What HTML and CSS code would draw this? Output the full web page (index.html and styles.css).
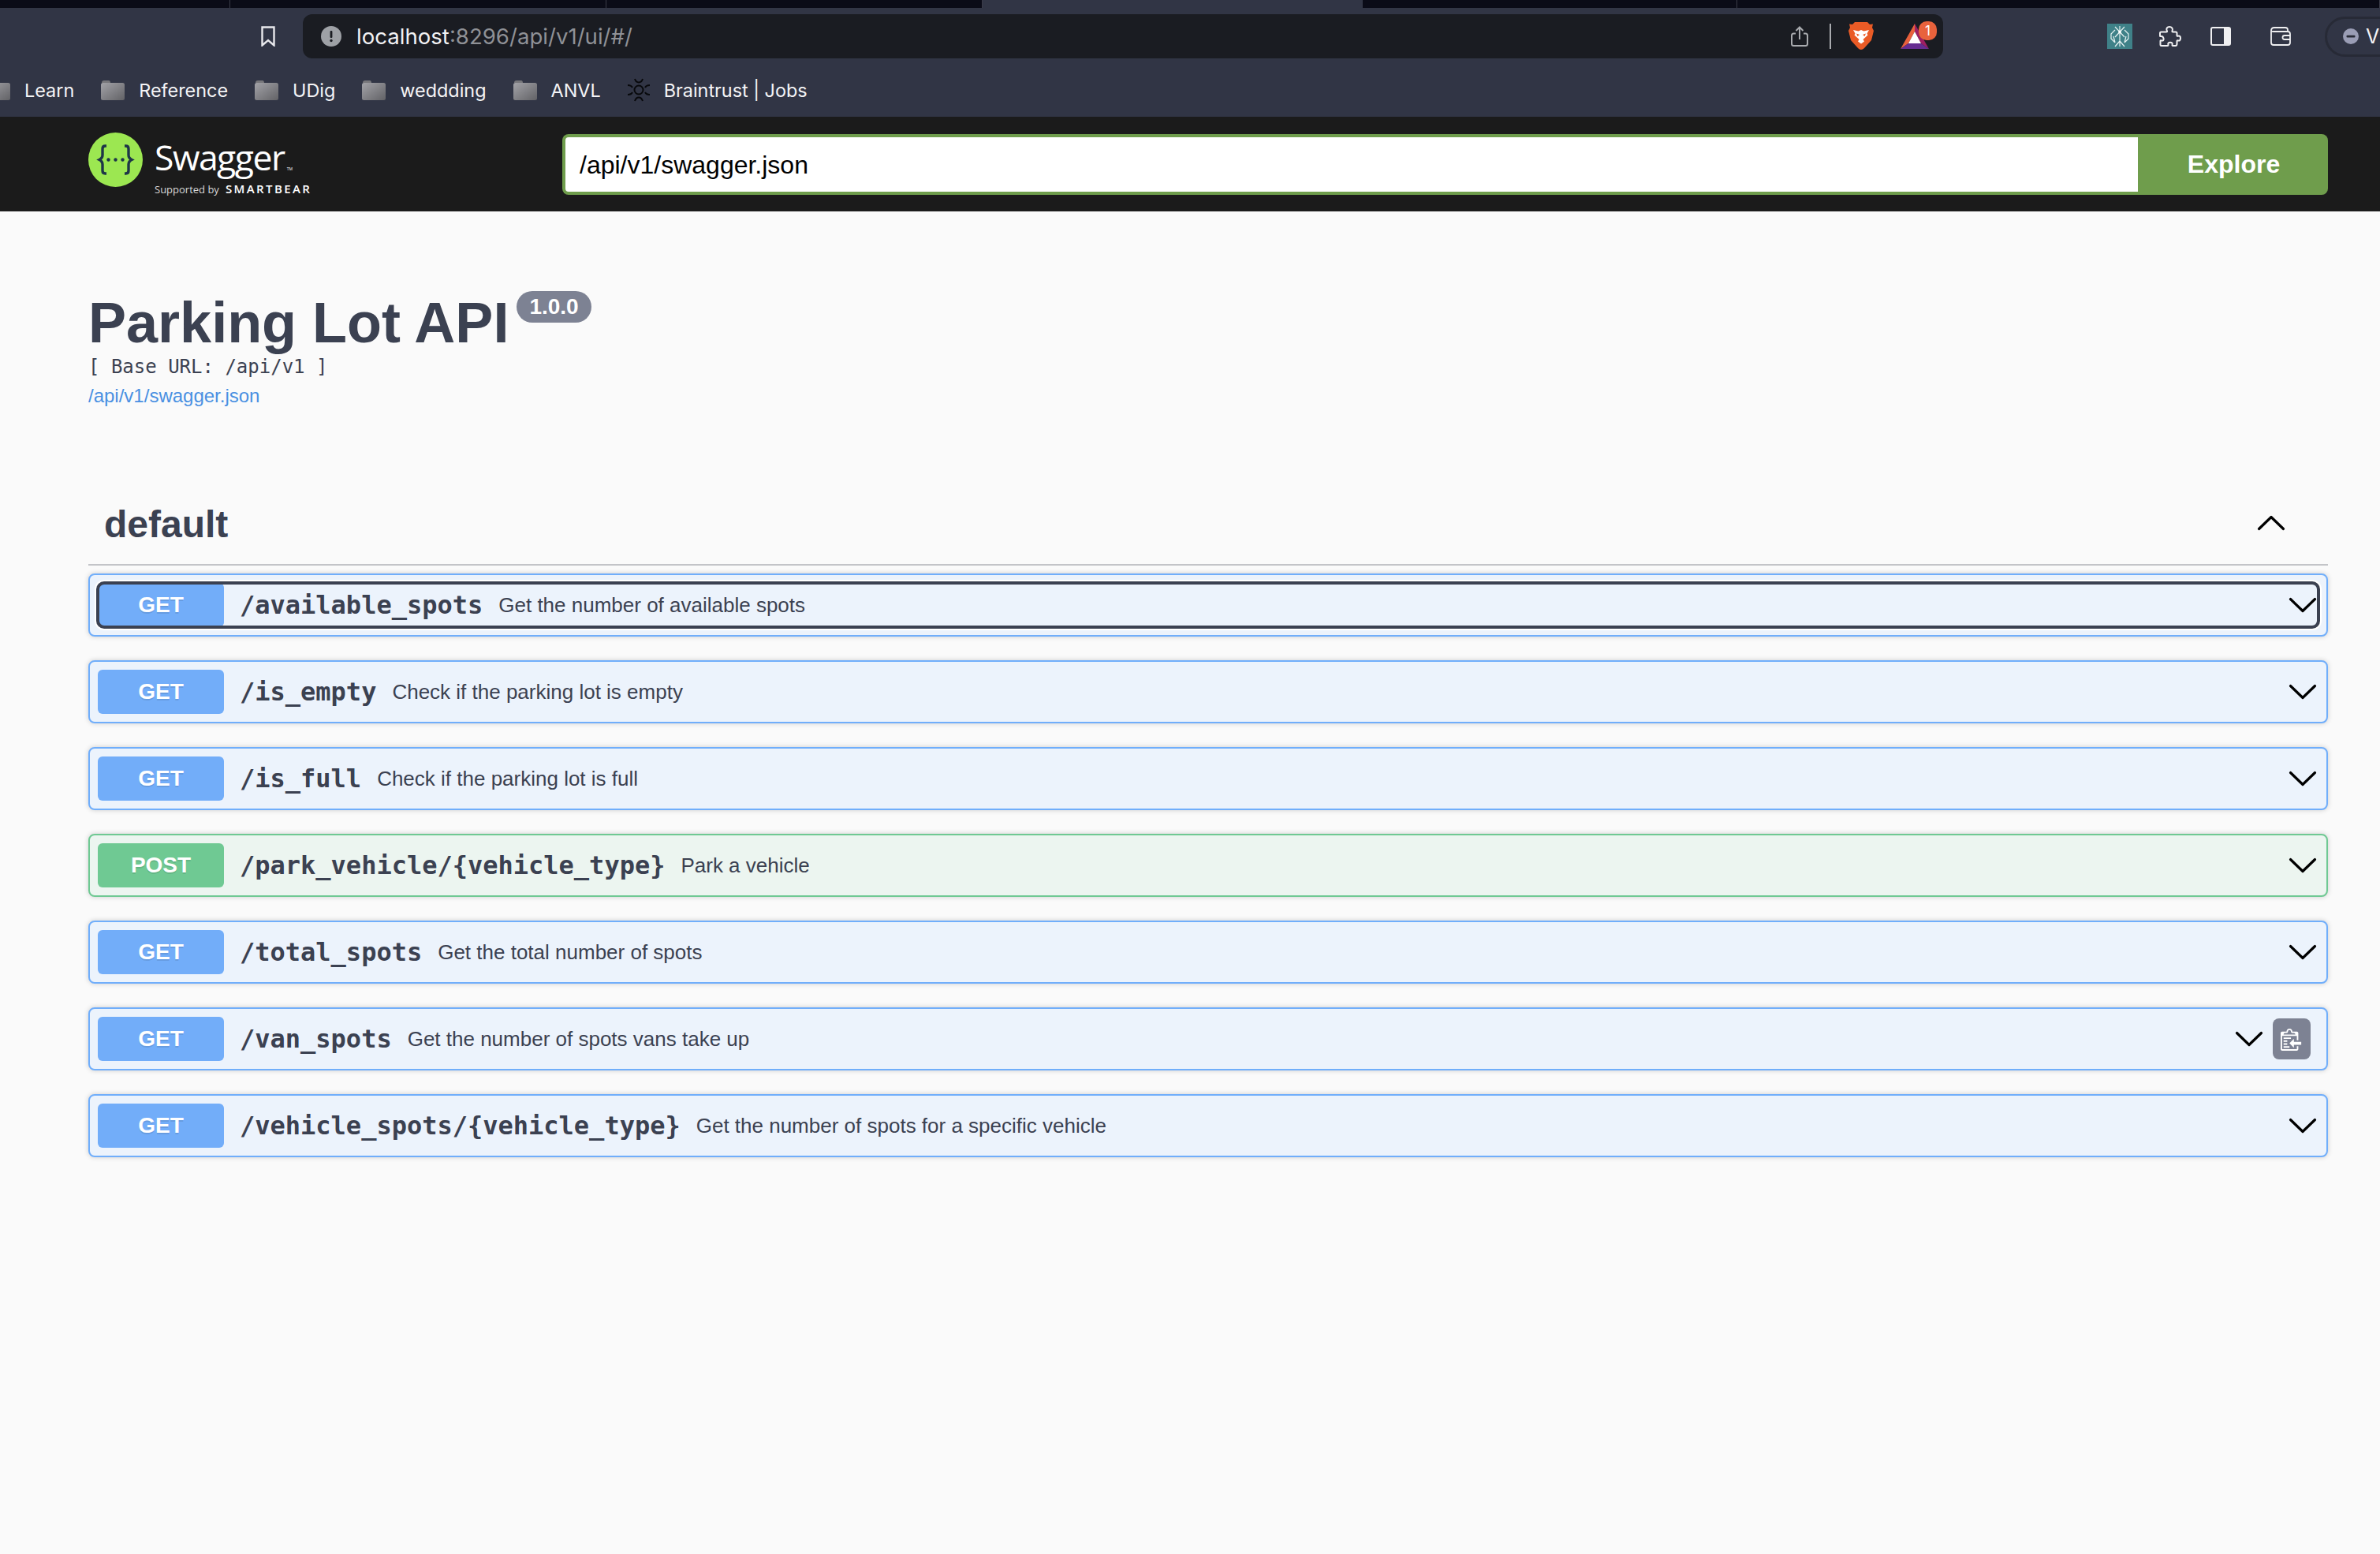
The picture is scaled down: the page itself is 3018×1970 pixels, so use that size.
FILE: index.html
```html
<!DOCTYPE html>
<html lang="en">
<head>
    <meta charset="UTF-8">
    <title>Swagger UI</title>
    <link rel="stylesheet" href="styles.css">
</head>
<body>
    <svg class="defs" width="0" height="0">
        <defs>
            <linearGradient id="folderFill" x1="0" y1="0" x2="1" y2="1">
                <stop offset="0" stop-color="#a2a2a7"/>
                <stop offset="1" stop-color="#626266"/>
            </linearGradient>
            <symbol id="folder" viewBox="0 0 30 25">
                <path d="M1 3c0-2 1-3 3-3h6c1 0 2 1 2 3z" fill="#77777b"/>
                <rect x="0" y="3" width="30" height="22" rx="2.5" fill="url(#folderFill)"/>
            </symbol>
            <symbol id="chevron" viewBox="0 0 40 40">
                <polyline points="4.5,12.5 20,27.5 35.5,12.5" fill="none" stroke="#000" stroke-width="3.2" stroke-linecap="round" stroke-linejoin="round"/>
            </symbol>
        </defs>
    </svg>

    <div class="tabstrip">
        <div class="tab"></div>
        <div class="tab"></div>
        <div class="tab"></div>
        <div class="tab tab-active"></div>
        <div class="tab"></div>
        <div class="tab"></div>
    </div>

    <div class="toolbar">
        <div class="navrow">
            <svg class="bookmark-icon" viewBox="0 0 18 26"><path d="M1.5 1.5h15v23L9 18l-7.500 6.500z" fill="none" stroke="#e8e8ec" stroke-width="2.400"/></svg>
            <div class="address">
                <svg class="info-icon" viewBox="0 0 26 26"><circle cx="13" cy="13" r="13" fill="#9ea1a6"/><rect x="11.600" y="6" width="2.800" height="9" rx="1" fill="#1a1c22"/><circle cx="13" cy="18.500" r="1.700" fill="#1a1c22"/></svg>
                <span class="host">localhost</span><span class="host-rest">:8296/api/v1/ui/#/</span>
                <div class="address-icons">
                    <svg class="share-icon" viewBox="0 0 22 26"><path d="M6 9.500H3.500Q1 9.500 1 12v10.500Q1 25 3.500 25h15q2.500 0 2.500-2.500V12q0-2.500-2.500-2.500H16M11 17V1.500M6.500 6 11 1.500 15.500 6" fill="none" stroke="#a9abaf" stroke-width="2"/></svg>
                    <div class="address-divider"></div>
                    <svg class="brave-icon" viewBox="0 0 32 36">
                        <path d="M8 0h16l3 3 4-.5L30 7l2 4-3 12-9 10c-2.500 2.500-5.500 2.500-8 0L3 23 0 11l2-4-1-4.500L5 3z" fill="#ea5b26"/>
                        <path d="M6 10l6.500 1.500L16 10l3.500 1.500L26 10l-2.500 4.500 1 2-6 5.500 1.500 2.500-4 3-4-3 1.500-2.500-6-5.500 1-2z" fill="#fff"/>
                        <path d="M10 14.500l4 1.500-2.500 2zM22 14.500l-4 1.500 2.500 2z" fill="#ea5b26"/>
                    </svg>
                    <div class="bat">
                        <svg class="bat-icon" viewBox="0 0 36 32">
                            <polygon points="18,0 0,32 10,25 18,10" fill="#e8603c"/>
                            <polygon points="18,0 36,32 26,25 18,10" fill="#9e1f63"/>
                            <polygon points="0,32 36,32 26,25 10,25" fill="#662d91"/>
                            <polygon points="18,10 10,25 26,25" fill="#fff"/>
                        </svg>
                        <span class="bat-count">1</span>
                    </div>
                </div>
            </div>
            <svg class="ext-icon" viewBox="0 0 32 32">
                <rect width="32" height="32" fill="#3f8188"/>
                <path d="M16 3v26M10 4l12 13M22 4 10 17M10 8 5 13v6l5 5M22 8l5 5v6l-5 5M10 24l-2-8M22 24l2-8M10 29l6-7 6 7" fill="none" stroke="#e6f2f2" stroke-width="1.200"/>
                <circle cx="16" cy="10.500" r="1.800" fill="#fff"/>
            </svg>
            <svg class="puzzle-icon" viewBox="0 0 28 26"><path d="M10 6.500C8 3 10.500 1 13 1s5 2 3.500 5.500c-.3.8.2 1 1 1H21c1 0 1.500.5 1.500 1.500v3c0 .8.5 1 1.200.7C26 11.800 27 13.500 27 15.500s-1 3.800-3.300 2.800c-.7-.3-1.200 0-1.200.7v3.500c0 1-.5 2.500-2 2.500h-3c-1 0-1.200-.7-.9-1.500.6-1.500-.6-2.800-2.600-2.800s-3.200 1.300-2.600 2.800c.3.800 0 1.500-.9 1.500H3c-1 0-1.500-.5-1.500-1.500V19c0-.8.5-1 1.200-.7C5 19.300 6 17.500 5.500 15.500 5 13.500 3.500 12.700 2 13c-.8.200-1 0-1-1V9c0-1 .500-1.500 1.500-1.500H9c1 0 1.300-.2 1-1z" fill="none" stroke="#f0f0f2" stroke-width="2"/></svg>
            <svg class="panel-icon" viewBox="0 0 26 24"><rect x="1" y="1" width="24" height="22" rx="2" fill="none" stroke="#f0f0f2" stroke-width="2"/><rect x="17" y="1" width="8" height="22" fill="#f0f0f2"/></svg>
            <svg class="wallet-icon" viewBox="0 0 26 24"><path d="M1 5q0-4 4-4h14q3 0 3 3v1M1 5v15q0 3 3 3h18q3 0 3-3V9q0-3-3-3H4Q1 6 1 5zM25 11h-7q-2.500 0-2.500 2.500T18 16h7" fill="none" stroke="#eeeef0" stroke-width="1.800"/></svg>
            <div class="profile-pill">
                <svg class="pill-icon" viewBox="0 0 20 20"><circle cx="10" cy="10" r="10" fill="#9a9db5"/><rect x="4.500" y="8.700" width="11" height="2.800" rx="1" fill="#272a36"/></svg>
                <span class="pill-name">VI</span>
            </div>
        </div>

        <div class="bookmarks">
            <div class="bm"><svg class="folder-icon"><use href="#folder"/></svg><span>Learn</span></div>
            <div class="bm"><svg class="folder-icon"><use href="#folder"/></svg><span>Reference</span></div>
            <div class="bm"><svg class="folder-icon"><use href="#folder"/></svg><span>UDig</span></div>
            <div class="bm"><svg class="folder-icon"><use href="#folder"/></svg><span>weddding</span></div>
            <div class="bm"><svg class="folder-icon"><use href="#folder"/></svg><span>ANVL</span></div>
            <div class="bm bm-site">
                <svg class="braintrust-icon" viewBox="0 0 32 30">
                    <g fill="none" stroke="#08090c" stroke-width="2">
                        <circle cx="16" cy="15" r="5.500"/>
                        <path d="M11 1c1 3 2.500 4.500 5 4.500S20 4 21 1M11 29c1-3 2.500-4.500 5-4.500s4 1.500 5 4.500M2 9c3 0 5 1 6 3M30 9c-3 0-5 1-6 3M2 21c3 0 5-1 6-3M30 21c-3 0-5-1-6-3"/>
                    </g>
                </svg>
                <span>Braintrust | Jobs</span>
            </div>
        </div>
    </div>

    <div class="topbar">
        <div class="logo">
            <svg class="logo-mark" viewBox="0 0 69 69">
                <circle cx="34.500" cy="34.500" r="34.500" fill="#9ce751"/>
                <path d="M23 17h-1.500q-3.500 0-3.500 3.500v8q0 4-4 6 4 2 4 6v8q0 3.500 3.500 3.500H23M46 17h1.500q3.500 0 3.500 3.500v8q0 4 4 6-4 2-4 6v8q0 3.500-3.500 3.500H46" fill="none" stroke="#1e3648" stroke-width="3.400"/>
                <circle cx="25.500" cy="34.500" r="2.200" fill="#1e3648"/>
                <circle cx="34.500" cy="34.500" r="2.200" fill="#1e3648"/>
                <circle cx="43.500" cy="34.500" r="2.200" fill="#1e3648"/>
            </svg>
            <div class="logo-text">
                <div class="logo-name">Swagger<span class="logo-tm">TM</span></div>
                <div class="logo-sub"><span class="logo-by">Supported by</span><span class="logo-bear">SMARTBEAR</span></div>
            </div>
        </div>
        <form class="explore-form">
            <div class="url-input">/api/v1/swagger.json</div>
            <div class="explore-btn">Explore</div>
        </form>
    </div>

    <div class="wrapper">
        <div class="info">
            <div class="title-row">
                <h1 class="title">Parking Lot API</h1>
                <span class="version">1.0.0</span>
            </div>
            <pre class="base-url">[ Base URL: /api/v1 ]</pre>
            <a class="spec-link" href="#">/api/v1/swagger.json</a>
        </div>

        <div class="tag-header">
            <h3 class="tag-name">default</h3>
            <svg class="chevron chevron-up"><use href="#chevron"/></svg>
        </div>

        <div class="opblock get">
            <div class="summary focused">
                <span class="method">GET</span>
                <span class="path">/available_spots</span>
                <span class="desc">Get the number of available spots</span>
                <svg class="chevron"><use href="#chevron"/></svg>
            </div>
        </div>
        <div class="opblock get">
            <div class="summary">
                <span class="method">GET</span>
                <span class="path">/is_empty</span>
                <span class="desc">Check if the parking lot is empty</span>
                <svg class="chevron"><use href="#chevron"/></svg>
            </div>
        </div>
        <div class="opblock get">
            <div class="summary">
                <span class="method">GET</span>
                <span class="path">/is_full</span>
                <span class="desc">Check if the parking lot is full</span>
                <svg class="chevron"><use href="#chevron"/></svg>
            </div>
        </div>
        <div class="opblock post">
            <div class="summary">
                <span class="method">POST</span>
                <span class="path">/park_vehicle/{vehicle_type}</span>
                <span class="desc">Park a vehicle</span>
                <svg class="chevron"><use href="#chevron"/></svg>
            </div>
        </div>
        <div class="opblock get">
            <div class="summary">
                <span class="method">GET</span>
                <span class="path">/total_spots</span>
                <span class="desc">Get the total number of spots</span>
                <svg class="chevron"><use href="#chevron"/></svg>
            </div>
        </div>
        <div class="opblock get">
            <div class="summary">
                <span class="method">GET</span>
                <span class="path">/van_spots</span>
                <span class="desc">Get the number of spots vans take up</span>
                <svg class="chevron"><use href="#chevron"/></svg>
                <div class="copy-btn">
                    <svg class="copy-icon" viewBox="0 0 15 16"><path fill="#fff" fill-rule="evenodd" d="M2 13h4v1H2v-1zm5-6H2v1h5V7zm2 3V8l-3 3 3 3v-2h5v-2H9zM4.500 9H2v1h2.500V9zM2 12h2.500v-1H2v1zm9 1h1v2c-.02.28-.11.52-.3.7-.19.18-.42.28-.7.3H1c-.55 0-1-.45-1-1V4c0-.55.45-1 1-1h3c0-1.110.89-2 2-2 1.110 0 2 .89 2 2h3c.55 0 1 .45 1 1v5h-1V6H1v9h10v-2zM2 5h8c0-.55-.45-1-1-1H8c-.55 0-1-.45-1-1s-.45-1-1-1-1 .45-1 1-.45 1-1 1H3c-.55 0-1 .45-1 1z"/></svg>
                </div>
            </div>
        </div>
        <div class="opblock get">
            <div class="summary">
                <span class="method">GET</span>
                <span class="path">/vehicle_spots/{vehicle_type}</span>
                <span class="desc">Get the number of spots for a specific vehicle</span>
                <svg class="chevron"><use href="#chevron"/></svg>
            </div>
        </div>
    </div>
</body>
</html>
```

FILE: styles.css
```css
html, body {
    margin: 0;
    height: 100%;
}
body {
    background: #fafafa;
    font-family: "Liberation Sans", Arial, sans-serif;
    color: #3b4151;
    overflow: hidden;
}
.defs {
    display: block;
    height: 0;
}

/* browser chrome */
.tabstrip {
    display: grid;
    grid-template-columns: 292px 477px 477px 482px 475px 1fr;
    height: 10px;
    background: #0a0b17;
}
.tab {
    border-right: 1px solid #3a3c48;
}
.tab-active {
    background: #313545;
    border-right: none;
}
.toolbar {
    height: 138px;
    background: #313545;
    font-family: Inter, "Liberation Sans", sans-serif;
    color: #f4f4f6;
}
.navrow {
    display: flex;
    align-items: center;
    width: 3100px;
    height: 66px;
    padding: 6px 0 0 331px;
    box-sizing: border-box;
}
.bookmark-icon {
    width: 18px;
    height: 26px;
    margin-right: 35px;
}
.address {
    display: flex;
    align-items: center;
    width: 2080px;
    height: 56px;
    padding-left: 23px;
    box-sizing: border-box;
    background: #1a1c22;
    border-radius: 12px;
    font-size: 27.6px;
}
.info-icon {
    width: 26px;
    height: 26px;
    margin-right: 19px;
}
.host {
    color: #f2f2f4;
}
.host-rest {
    color: #8f9196;
}
.address-icons {
    display: flex;
    align-items: center;
    margin-left: auto;
    padding-right: 18px;
}
.share-icon {
    width: 22px;
    height: 26px;
}
.address-divider {
    width: 2px;
    height: 32px;
    margin: 0 22px 0 27px;
    background: #a9abaf;
}
.brave-icon {
    width: 32px;
    height: 36px;
    margin-right: 34px;
}
.bat {
    position: relative;
    width: 36px;
    height: 32px;
}
.bat-icon {
    display: block;
    width: 36px;
    height: 32px;
}
.bat-count {
    position: absolute;
    left: 23px;
    top: -3px;
    width: 23px;
    height: 24px;
    background: #e8623c;
    border-radius: 10px;
    color: #fff;
    font-size: 17px;
    line-height: 24px;
    text-align: center;
}
.ext-icon {
    width: 32px;
    height: 32px;
    margin-left: 208px;
}
.puzzle-icon {
    width: 28px;
    height: 26px;
    margin-left: 34px;
}
.panel-icon {
    width: 26px;
    height: 24px;
    margin-left: 37px;
}
.wallet-icon {
    width: 26px;
    height: 24px;
    margin-left: 50px;
}
.profile-pill {
    display: flex;
    align-items: center;
    width: 120px;
    height: 51px;
    margin-left: 43px;
    padding-left: 20px;
    box-sizing: border-box;
    border: 3px solid #272a36;
    border-radius: 26px;
    font-size: 25px;
    flex-shrink: 0;
}
.pill-icon {
    width: 20px;
    height: 20px;
    margin-right: 9px;
}
.bookmarks {
    display: flex;
    align-items: center;
    gap: 34px;
    height: 68px;
    margin-top: 4px;
    margin-left: -17px;
    font-size: 23.4px;
}
.bm {
    display: flex;
    align-items: center;
    gap: 18px;
}
.bm-site {
    gap: 16px;
    margin-left: -2px;
}
.folder-icon {
    width: 30px;
    height: 25px;
}
.braintrust-icon {
    width: 32px;
    height: 30px;
}

/* swagger top bar */
.topbar {
    display: flex;
    align-items: center;
    height: 120px;
    padding: 0 66px 0 112px;
    background: #1b1b1b;
}
.logo {
    display: flex;
    align-items: flex-start;
    width: 601px;
    height: 69px;
    margin-top: -11px;
    color: #fff;
    font-family: "Open Sans", sans-serif;
}
.logo-mark {
    width: 69px;
    height: 69px;
}
.logo-text {
    margin: 7px 0 0 15px;
}
.logo-name {
    display: flex;
    align-items: flex-end;
    height: 48px;
    font-size: 44.500px;
    line-height: 48px;
    letter-spacing: -1.500px;
}
.logo-tm {
    margin: 0 0 6px 3px;
    font-size: 5px;
    line-height: 6px;
    letter-spacing: 0;
}
.logo-sub {
    display: flex;
    align-items: baseline;
    margin-top: 8px;
    line-height: 16px;
}
.logo-by {
    font-size: 13px;
    color: #d8d8d8;
}
.logo-bear {
    margin-left: 8px;
    font-size: 15px;
    font-weight: 600;
    letter-spacing: 2.400px;
}
.explore-form {
    display: flex;
    flex: 1;
    height: 77px;
    margin: 1px 0 0;
}
.url-input {
    flex: 1;
    padding-left: 18px;
    background: #fff;
    border: 4px solid #6f9d4c;
    border-right: none;
    border-radius: 8px 0 0 8px;
    color: #000;
    font-size: 32px;
    line-height: 71px;
}
.explore-btn {
    width: 239px;
    padding-left: 2px;
    background: #6f9d4c;
    border-radius: 0 8px 8px 0;
    color: #fff;
    font-size: 32px;
    font-weight: bold;
    line-height: 77px;
    text-align: center;
}

/* swagger content */
.wrapper {
    padding: 0 66px 0 112px;
}
.info {
    padding-top: 99px;
}
.title-row {
    display: flex;
    align-items: flex-start;
}
.title {
    margin: 0;
    font-size: 72px;
    font-weight: bold;
    line-height: 84px;
}
.version {
    margin: 2px 0 0 10px;
    padding: 0 16px;
    background: #7d8293;
    border-radius: 20px;
    color: #fff;
    font-size: 28px;
    font-weight: bold;
    line-height: 40px;
}
.base-url {
    margin: 0;
    font-family: "DejaVu Sans Mono", monospace;
    font-size: 24px;
    line-height: 28px;
}
.spec-link {
    display: block;
    margin-top: 7px;
    color: #4990e2;
    font-size: 24px;
    line-height: 32px;
    text-decoration: none;
}
.tag-header {
    display: flex;
    align-items: center;
    justify-content: space-between;
    margin: 117px 0 10px;
    padding: 0 52px 20px 20px;
    border-bottom: 2px solid #c3c4c8;
}
.tag-name {
    margin: 0;
    font-size: 48px;
    font-weight: bold;
    line-height: 60px;
}
.chevron {
    display: block;
    width: 40px;
    height: 40px;
    flex-shrink: 0;
}
.chevron-up {
    transform: rotate(180deg);
    margin-bottom: 4px;
}
.opblock {
    margin-bottom: 30px;
    padding: 10px;
    border: 2px solid;
    border-radius: 8px;
    box-shadow: 0 0 6px rgba(0, 0, 0, 0.19);
}
.opblock.get {
    background: #ecf3fc;
    border-color: #70aefb;
}
.opblock.post {
    background: #ecf5f0;
    border-color: #6fc993;
}
.summary {
    display: flex;
    align-items: center;
    height: 56px;
    border-radius: 8px;
}
.summary.focused {
    outline: 4px solid #3b4151;
    outline-offset: -2px;
    box-shadow: 0 0 0 4px #fff;
}
.method {
    width: 160px;
    height: 56px;
    flex-shrink: 0;
    border-radius: 6px;
    color: #fff;
    font-size: 28px;
    font-weight: bold;
    line-height: 56px;
    text-align: center;
    text-shadow: 0 2px 0 rgba(0, 0, 0, 0.1);
}
.get .method {
    background: #72adf9;
}
.post .method {
    background: #6fc993;
}
.path {
    padding: 0 20px;
    font-family: "DejaVu Sans Mono", monospace;
    font-size: 32px;
    font-weight: bold;
}
.desc {
    flex: 1;
    font-size: 26px;
}
.copy-btn {
    display: flex;
    align-items: center;
    justify-content: center;
    width: 48px;
    height: 52px;
    margin: 0 10px;
    background: #7d8293;
    border-radius: 8px;
}
.copy-icon {
    width: 28px;
    height: 30px;
}
```
